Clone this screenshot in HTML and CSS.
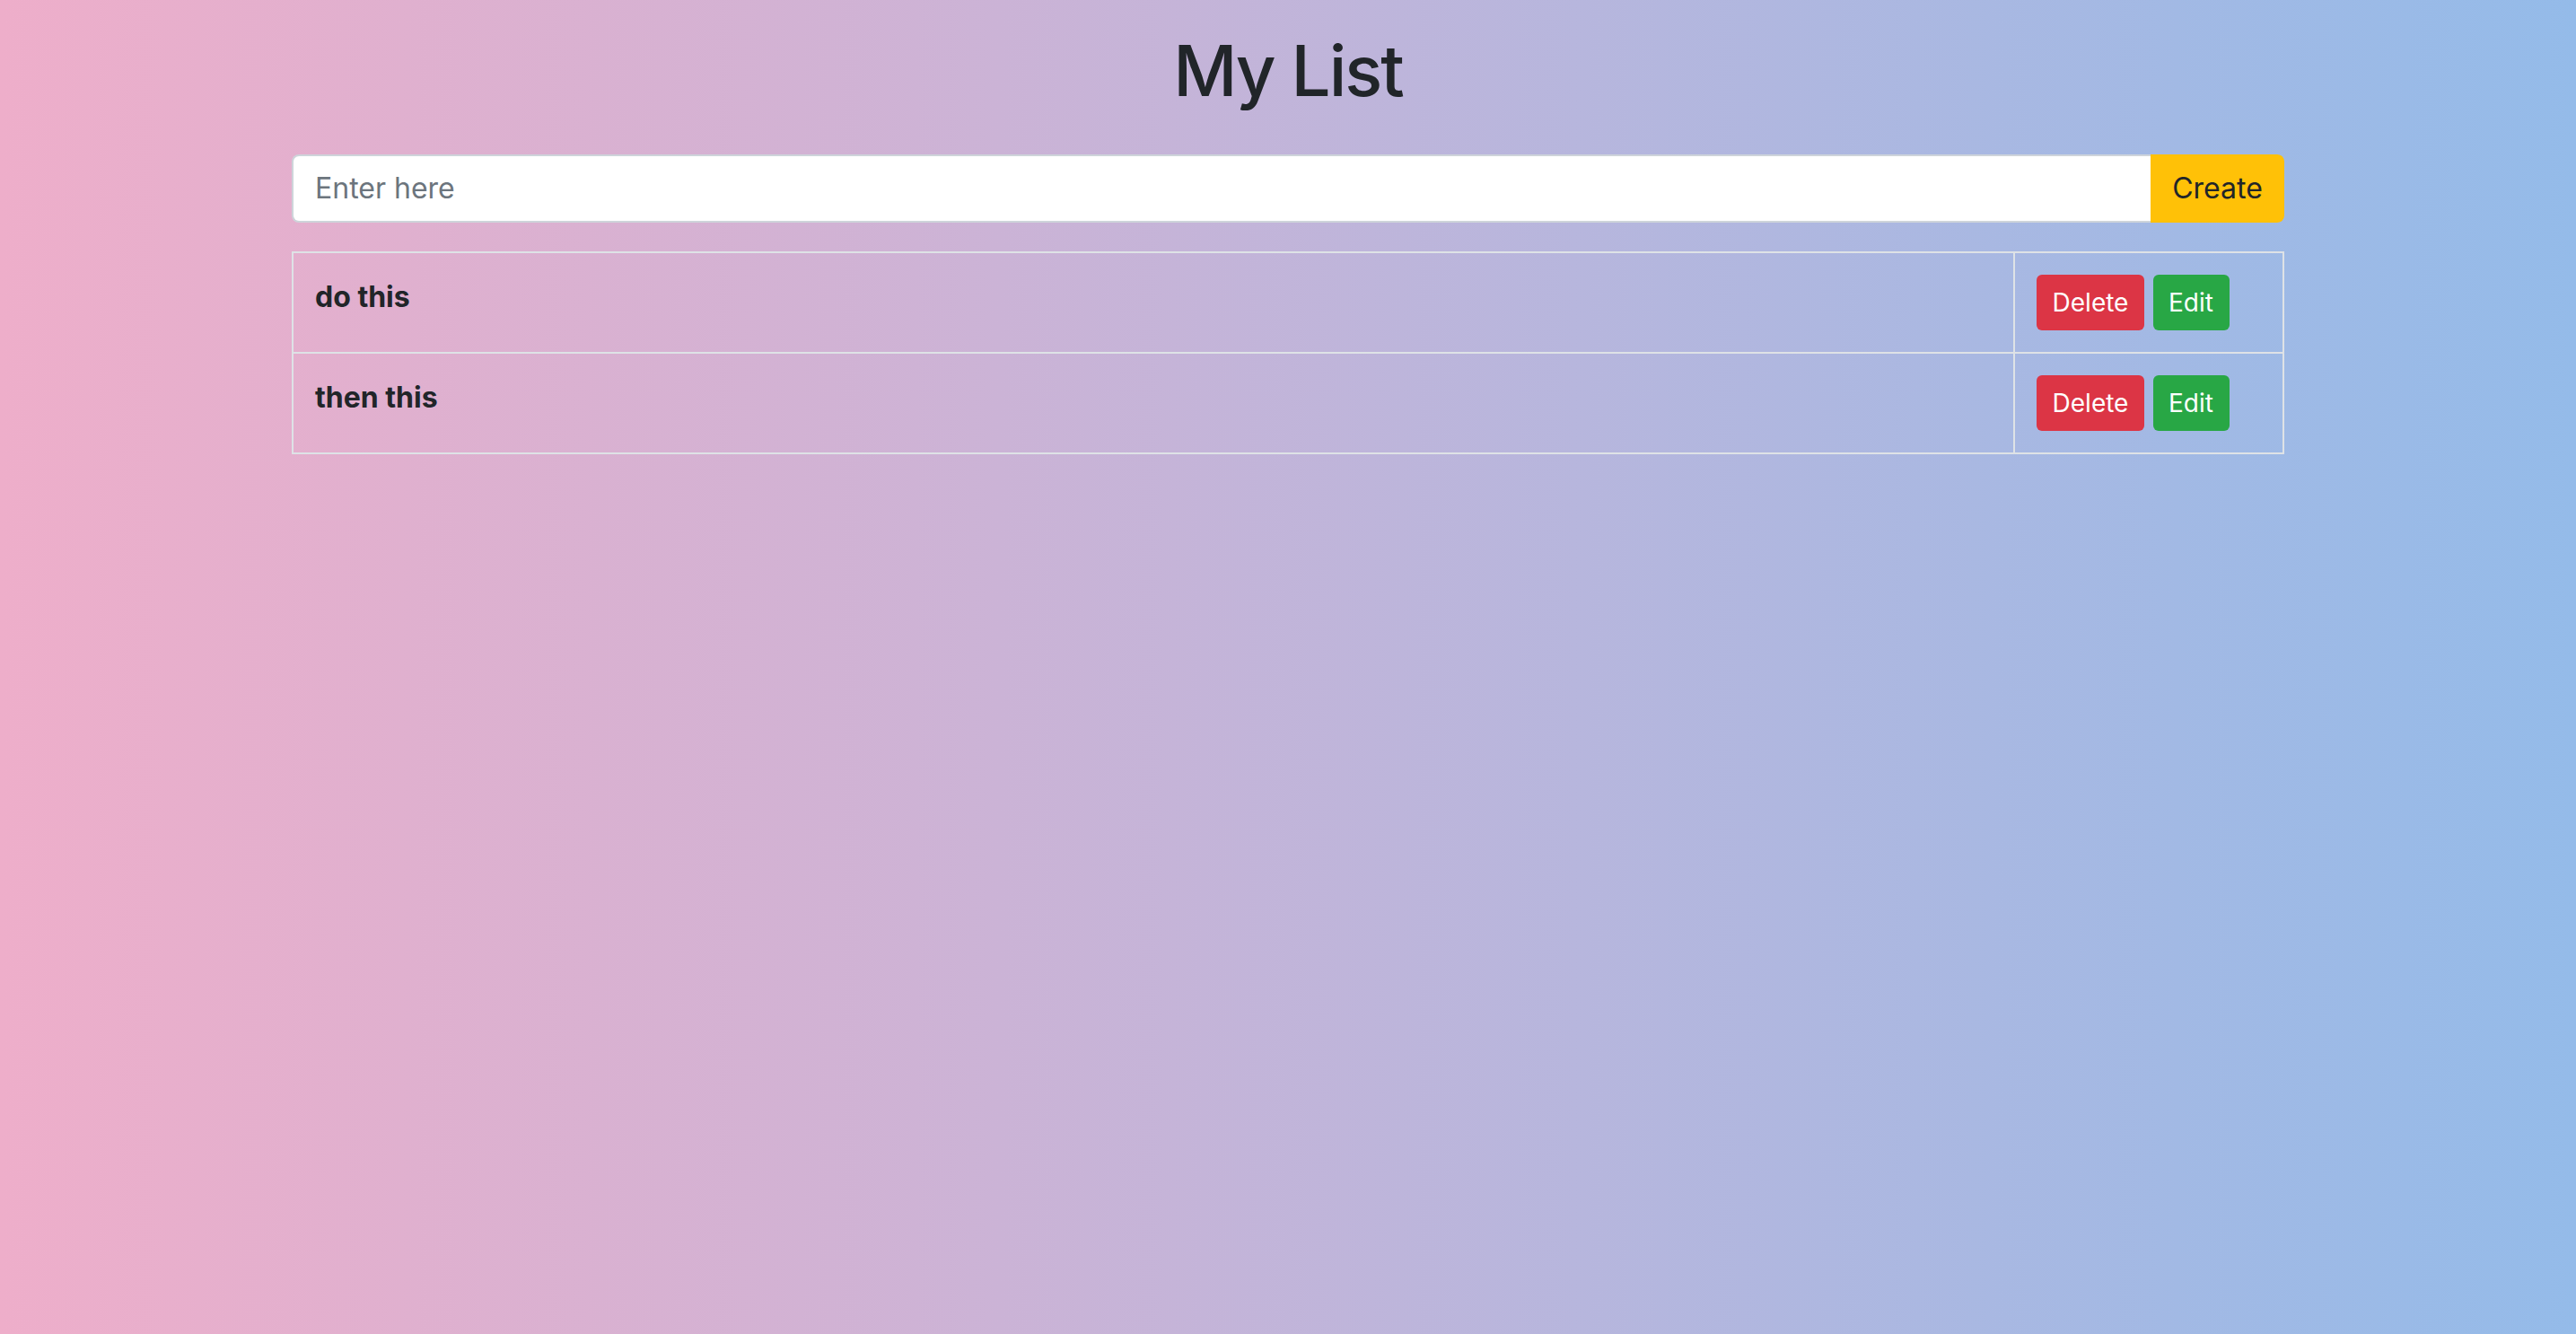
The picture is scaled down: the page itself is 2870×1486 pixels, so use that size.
FILE: index.html
```html
<!DOCTYPE html>
<html lang="en">
<head>
<meta charset="utf-8">
<title>My List</title>
<link rel="stylesheet" href="styles.css">
</head>
<body>
<div class="container">
  <h1 class="title">My List</h1>
  <form class="input-group">
    <input class="form-control" type="text" placeholder="Enter here">
    <button class="btn btn-create" type="button">Create</button>
  </form>
  <table class="list">
    <tbody>
      <tr>
        <td class="item">do this</td>
        <td class="actions">
          <button class="btn-sm btn-delete" type="button">Delete</button>
          <button class="btn-sm btn-edit" type="button">Edit</button>
        </td>
      </tr>
      <tr>
        <td class="item">then this</td>
        <td class="actions">
          <button class="btn-sm btn-delete" type="button">Delete</button>
          <button class="btn-sm btn-edit" type="button">Edit</button>
        </td>
      </tr>
    </tbody>
  </table>
</div>
</body>
</html>
```
FILE: styles.css
```css
* { box-sizing: border-box; }
html, body { height: 100%; }
body {
  margin: 0;
  min-height: 100%;
  font-family: Inter, "Noto Sans", "Liberation Sans", sans-serif;
  color: #212529;
  background: linear-gradient(90deg, #eeaeca 0%, #94bbe9 100%);
}
.container {
  max-width: 2280px;
  margin: 0 auto;
  padding: 0 30px;
}
.title {
  margin: 0;
  padding-top: 32px;
  font-size: 78px;
  font-weight: 500;
  letter-spacing: -2px;
  line-height: 1.2;
  text-align: center;
}
.input-group {
  display: flex;
  margin: 46px 0 32px;
}
.form-control {
  flex: 1;
  height: 76px;
  padding: 12px 24px;
  font: inherit;
  font-size: 32px;
  color: #495057;
  background: #fff;
  border: 2px solid #ced4da;
  border-right: none;
  border-radius: 8px 0 0 8px;
  outline: none;
}
.form-control::placeholder { color: #6c757d; }
.btn {
  font: inherit;
  font-size: 32px;
  padding: 12px 24px;
  border: none;
  cursor: pointer;
}
.btn-create {
  width: 149px;
  height: 76px;
  background: #ffc107;
  color: #212529;
  border-radius: 0 8px 8px 0;
}
.list {
  width: 100%;
  border-collapse: collapse;
}
.list td {
  border: 2px solid #dee2e6;
  padding: 24px;
  vertical-align: top;
}
.item {
  padding-left: 25px;
  font-size: 32px;
  font-weight: 700;
  line-height: 1.55;
}
.actions {
  width: 300px;
  white-space: nowrap;
}
.btn-sm {
  font: inherit;
  font-size: 28px;
  line-height: 1.5;
  height: 62px;
  padding: 8px 16px;
  border: none;
  border-radius: 6px;
  color: #fff;
  cursor: pointer;
  vertical-align: top;
}
.btn-delete { background: #dc3545; width: 120px; margin-right: 5px; }
.btn-edit { background: #28a745; width: 85px; }
```
